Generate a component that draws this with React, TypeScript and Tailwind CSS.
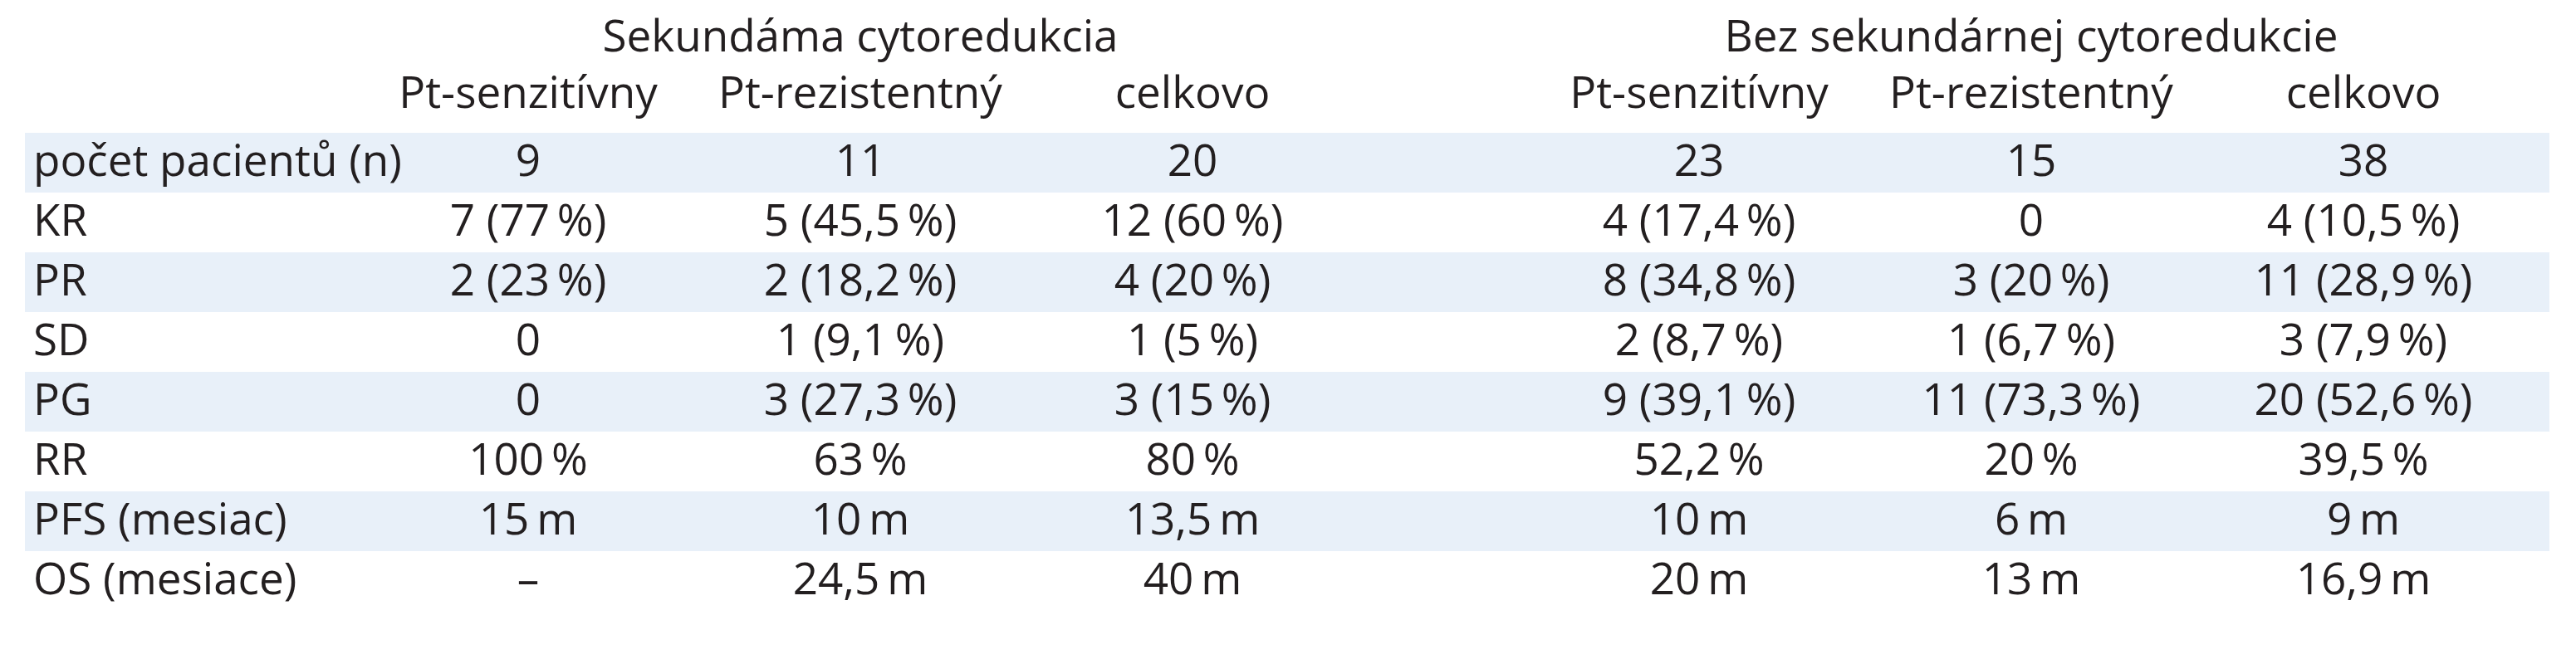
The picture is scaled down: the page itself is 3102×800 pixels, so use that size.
import React from 'react';

type Row = { label: string; values: string[] };

const rows: Row[] = [
  { label: 'počet pacientů (n)', values: ['9', '11', '20', '23', '15', '38'] },
  { label: 'KR', values: ['7 (77\u2009%)', '5 (45,5\u2009%)', '12 (60\u2009%)', '4 (17,4\u2009%)', '0', '4 (10,5\u2009%)'] },
  { label: 'PR', values: ['2 (23\u2009%)', '2 (18,2\u2009%)', '4 (20\u2009%)', '8 (34,8\u2009%)', '3 (20\u2009%)', '11 (28,9\u2009%)'] },
  { label: 'SD', values: ['0', '1 (9,1\u2009%)', '1 (5\u2009%)', '2 (8,7\u2009%)', '1 (6,7\u2009%)', '3 (7,9\u2009%)'] },
  { label: 'PG', values: ['0', '3 (27,3\u2009%)', '3 (15\u2009%)', '9 (39,1\u2009%)', '11 (73,3\u2009%)', '20 (52,6\u2009%)'] },
  { label: 'RR', values: ['100\u2009%', '63\u2009%', '80\u2009%', '52,2\u2009%', '20\u2009%', '39,5\u2009%'] },
  { label: 'PFS (mesiac)', values: ['15\u2009m', '10\u2009m', '13,5\u2009m', '10\u2009m', '6\u2009m', '9\u2009m'] },
  { label: 'OS (mesiace)', values: ['–', '24,5\u2009m', '40\u2009m', '20\u2009m', '13\u2009m', '16,9\u2009m'] },
];

const subHeads = ['Pt-senzitívny', 'Pt-rezistentný', 'celkovo'];

// label | 3 columns | gap | 3 columns
const grid = 'grid grid-cols-[406px_400px_400px_400px_210px_400px_400px_400px] w-[3040px] pr-[24px]';

const App: React.FC = () => {
  return (
    <div className="w-[3102px] h-[800px] bg-white pl-[30px] pt-[8px] text-[#231f20] font-['Open_Sans',sans-serif] text-[53px]">
      {/* Skupiny */}
      <div className={`${grid} h-[68px] leading-[68px]`}>
        <div />
        <div className="col-span-3 text-center">Sekundáma cytoredukcia</div>
        <div />
        <div className="col-span-3 text-center">Bez sekundárnej cytoredukcie</div>
      </div>

      {/* Podskupiny */}
      <div className={`${grid} h-[68px] leading-[68px] mb-[16px]`}>
        <div />
        {subHeads.map((h) => (
          <div key={'a' + h} className="text-center">{h}</div>
        ))}
        <div />
        {subHeads.map((h) => (
          <div key={'b' + h} className="text-center">{h}</div>
        ))}
      </div>

      {/* Riadky */}
      {rows.map((r, i) => (
        <div
          key={r.label}
          className={`${grid} h-[72px] leading-[64px] pb-[8px] ${i % 2 === 0 ? 'bg-[#e8f0f9]' : ''}`}
        >
          <div className="pl-[10px] whitespace-nowrap">{r.label}</div>
          {r.values.slice(0, 3).map((v, j) => (
            <div key={j} className="text-center whitespace-nowrap">{v}</div>
          ))}
          <div />
          {r.values.slice(3).map((v, j) => (
            <div key={j + 3} className="text-center whitespace-nowrap">{v}</div>
          ))}
        </div>
      ))}
    </div>
  );
};

export default App;
